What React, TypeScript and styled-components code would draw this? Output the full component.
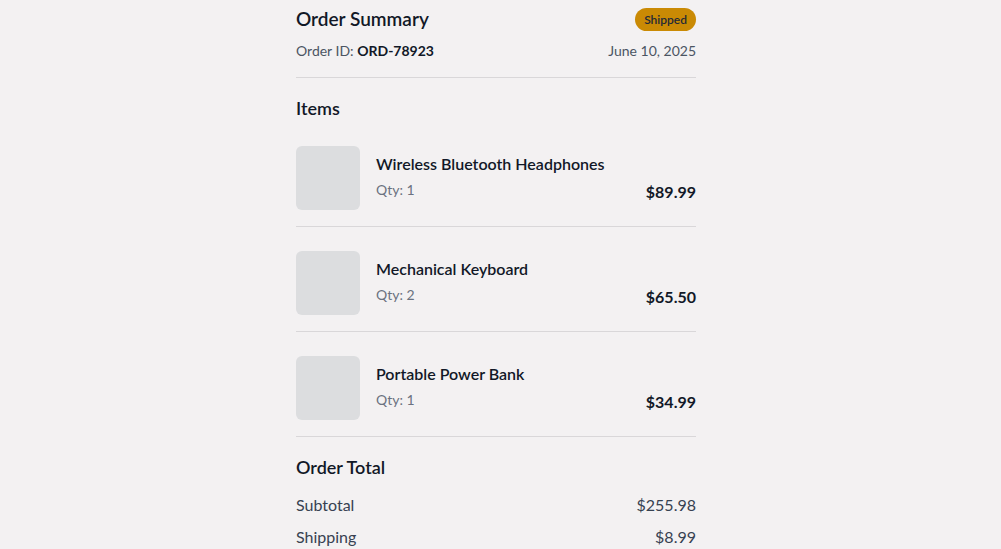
import React from "react";
import styled, { createGlobalStyle } from "styled-components";

const GlobalStyle = createGlobalStyle`
  html, body {
    margin: 0;
    padding: 0;
    background: #f3f1f2;
  }
  body {
    font-family: "Lato", "Noto Sans", sans-serif;
    color: #111827;
  }
`;

const Page = styled.div`
  display: flex;
  justify-content: center;
  padding: 5px 9px 0 0;
`;

const Card = styled.div`
  width: 400px;
  display: flex;
  flex-direction: column;
`;

const Section = styled.section<{ $top?: boolean; $flushBottom?: boolean; $divider?: boolean }>`
  padding-top: ${(p) => (p.$top ? 0 : 16)}px;
  padding-bottom: ${(p) => (p.$flushBottom ? 0 : 16)}px;
  border-bottom: ${(p) => (p.$divider ? "1px solid #d9d7d9" : "none")};
`;

const HeaderRow = styled.div`
  display: flex;
  justify-content: space-between;
  align-items: center;
`;

const Title = styled.h1`
  margin: 0;
  font-size: 19px;
  line-height: 28px;
  font-weight: 600;
`;

const Badge = styled.span`
  display: inline-flex;
  align-items: center;
  height: 23px;
  padding: 0 9px;
  border-radius: 999px;
  background: #ca8a04;
  color: #1f2937;
  font-size: 12px;
  font-weight: 600;
`;

const MetaRow = styled.div`
  margin-top: 8px;
  display: flex;
  justify-content: space-between;
  font-size: 14px;
  line-height: 20px;
  color: #4b5563;
`;

const Strong = styled.span`
  color: #111827;
  font-weight: 700;
`;

const Heading = styled.h2<{ $gap: number }>`
  margin: 0 0 ${(p) => p.$gap}px;
  font-size: 18px;
  line-height: 28px;
  font-weight: 600;
`;

const ItemList = styled.div`
  display: flex;
  flex-direction: column;
  gap: 8px;
`;

const Item = styled.div`
  display: flex;
  align-items: center;
  gap: 16px;
  padding: 16px 0;
  border-bottom: 1px solid #d9d7d9;
`;

const Thumb = styled.div`
  width: 64px;
  height: 64px;
  flex-shrink: 0;
  border-radius: 6px;
  background: #dcdddf;
`;

const Info = styled.div`
  flex: 1;
  display: flex;
  flex-direction: column;
  gap: 4px;
`;

const Name = styled.div`
  font-size: 16px;
  line-height: 24px;
  font-weight: 600;
`;

const InfoBottom = styled.div`
  display: flex;
  justify-content: space-between;
  align-items: center;
`;

const Qty = styled.span`
  font-size: 14px;
  line-height: 20px;
  color: #6b7280;
  margin-top: -4px;
`;

const Price = styled.span`
  font-size: 16px;
  line-height: 24px;
  font-weight: 700;
`;

const TotalRows = styled.div`
  display: flex;
  flex-direction: column;
  gap: 8px;
`;

const TotalRow = styled.div`
  display: flex;
  justify-content: space-between;
  font-size: 16px;
  line-height: 24px;
  color: #374151;
`;

const items = [
  { name: "Wireless Bluetooth Headphones", qty: 1, price: "$89.99" },
  { name: "Mechanical Keyboard", qty: 2, price: "$65.50" },
  { name: "Portable Power Bank", qty: 1, price: "$34.99" },
];

const totals = [
  { label: "Subtotal", value: "$255.98" },
  { label: "Shipping", value: "$8.99" },
];

export default function App() {
  return (
    <>
      <GlobalStyle />
      <Page>
        <Card>
          <Section $top $divider>
            <HeaderRow>
              <Title>Order Summary</Title>
              <Badge>Shipped</Badge>
            </HeaderRow>
            <MetaRow>
              <span>
                Order ID: <Strong>ORD-78923</Strong>
              </span>
              <span>June 10, 2025</span>
            </MetaRow>
          </Section>
          <Section $flushBottom>
            <Heading $gap={8}>Items</Heading>
            <ItemList>
              {items.map((it) => (
                <Item key={it.name}>
                  <Thumb />
                  <Info>
                    <Name>{it.name}</Name>
                    <InfoBottom>
                      <Qty>Qty: {it.qty}</Qty>
                      <Price>{it.price}</Price>
                    </InfoBottom>
                  </Info>
                </Item>
              ))}
            </ItemList>
          </Section>
          <Section $flushBottom>
            <Heading $gap={12}>Order Total</Heading>
            <TotalRows>
              {totals.map((t) => (
                <TotalRow key={t.label}>
                  <span>{t.label}</span>
                  <span>{t.value}</span>
                </TotalRow>
              ))}
            </TotalRows>
          </Section>
        </Card>
      </Page>
    </>
  );
}
